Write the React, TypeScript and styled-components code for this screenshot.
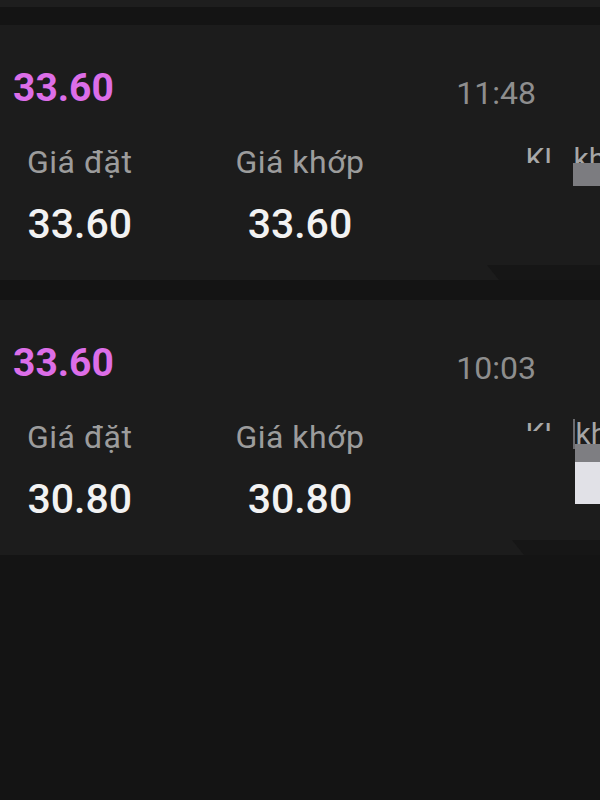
import React from 'react';
import styled, { createGlobalStyle } from 'styled-components';

const GlobalStyle = createGlobalStyle`
  html, body {
    margin: 0;
    padding: 0;
    background: #141414;
  }
  body {
    font-family: Roboto, "Noto Sans", "Liberation Sans", sans-serif;
    width: 600px;
    height: 800px;
    overflow: hidden;
  }
`;

const Page = styled.div`
  width: 600px;
  min-height: 800px;
  background: #141414;
  display: flex;
  flex-direction: column;
  gap: 20px;
`;

const Stub = styled.div`
  height: 7px;
  background: #1e1e1e;
  margin-bottom: -2px;
`;

const Card = styled.div<{ $notch: number }>`
  position: relative;
  background: #1c1c1c;
  padding: 40px 0 32px 0;
  overflow: hidden;

  &::after {
    content: '';
    position: absolute;
    right: 0;
    bottom: 0;
    left: ${(p) => p.$notch}px;
    height: 15px;
    background: #161616;
    clip-path: polygon(0 0, 100% 0, 100% 100%, 12px 100%);
  }
`;

const HeadRow = styled.div`
  display: flex;
  justify-content: space-between;
  align-items: flex-start;
  height: 46px;
  padding: 0 64px 0 13px;
`;

const Price = styled.div`
  font-size: 39px;
  line-height: 46px;
  font-weight: 700;
  color: #dc6ee8;
`;

const Time = styled.div`
  font-size: 32px;
  line-height: 36px;
  margin-top: 10px;
  color: #8e8e8e;
`;

const Row = styled.div`
  display: flex;
  align-items: flex-start;
  padding-left: 27px;
  margin-top: 33px;
`;

const Col = styled.div<{ $gap?: number }>`
  display: flex;
  flex-direction: column;
  align-items: center;
  margin-left: ${(p) => p.$gap ?? 0}px;
  flex-shrink: 0;
`;

const Label = styled.div`
  font-size: 32px;
  line-height: 36px;
  letter-spacing: 0.5px;
  color: #9c9c9c;
  white-space: nowrap;
`;

const Value = styled.div`
  font-size: 41px;
  line-height: 48px;
  font-weight: 500;
  color: #f2f2f2;
  margin-top: 20px;
`;

const ThirdCol = styled.div`
  display: flex;
  align-items: flex-start;
  margin-left: 161px;
  flex-shrink: 0;
`;

const KLClip = styled.div<{ $clip: number }>`
  height: ${(p) => p.$clip}px;
  overflow: hidden;
  font-size: 30px;
  line-height: 30px;
  color: #a8a8a8;
`;

const KhopBox = styled.div<{ $edge: boolean }>`
  position: relative;
  margin-left: 13px;
  width: 60px;
  font-size: 30px;
  line-height: 30px;
  color: #a6a6a6;
  white-space: nowrap;
  border-left: ${(p) => (p.$edge ? '2px solid #6a6a6e' : 'none')};
`;

const Block = styled.div<{ $top: number; $h: number; $bg: string }>`
  position: absolute;
  left: 0;
  right: 0;
  top: ${(p) => p.$top}px;
  height: ${(p) => p.$h}px;
  background: ${(p) => p.$bg};
`;

type Order = {
  price: string;
  time: string;
  placed: string;
  matched: string;
  notch: number;
  clip: number;
  edge: boolean;
  blocks: { top: number; h: number; bg: string }[];
};

const orders: Order[] = [
  {
    price: '33.60',
    time: '11:48',
    placed: '33.60',
    matched: '33.60',
    notch: 487,
    clip: 19,
    edge: false,
    blocks: [{ top: 19, h: 23, bg: '#7c7c80' }],
  },
  {
    price: '33.60',
    time: '10:03',
    placed: '30.80',
    matched: '30.80',
    notch: 512,
    clip: 12,
    edge: true,
    blocks: [
      { top: 25, h: 18, bg: '#7e7e82' },
      { top: 43, h: 42, bg: '#e1e1e7' },
    ],
  },
];

function OrderCard({ o }: { o: Order }) {
  return (
    <Card $notch={o.notch}>
      <HeadRow>
        <Price>{o.price}</Price>
        <Time>{o.time}</Time>
      </HeadRow>
      <Row>
        <Col>
          <Label>Giá đặt</Label>
          <Value>{o.placed}</Value>
        </Col>
        <Col $gap={103}>
          <Label>Giá khớp</Label>
          <Value>{o.matched}</Value>
        </Col>
        <ThirdCol>
          <KLClip $clip={o.clip}>KL</KLClip>
          <KhopBox $edge={o.edge}>
            khớp
            {o.blocks.map((b, i) => (
              <Block key={i} $top={b.top} $h={b.h} $bg={b.bg} />
            ))}
          </KhopBox>
        </ThirdCol>
      </Row>
    </Card>
  );
}

export default function App() {
  return (
    <Page>
      <GlobalStyle />
      <Stub />
      {orders.map((o, i) => (
        <OrderCard key={i} o={o} />
      ))}
    </Page>
  );
}
